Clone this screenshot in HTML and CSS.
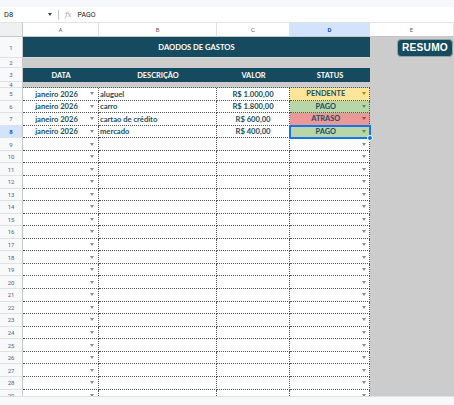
FILE: index.html
```html
<!DOCTYPE html>
<html lang="pt-BR">
<head>
<meta charset="utf-8">
<title>Gastos</title>
<link rel="stylesheet" href="styles.css">
</head>
<body>
<div class="app">
  <div class="topbar"></div>
  <div class="formula">
    <span class="ref">D8</span>
    <span class="refarrow"></span>
    <span class="sep"></span>
    <span class="fx">fx</span>
    <span class="fval">PAGO</span>
  </div>
  <div class="sheet">
    <div class="row hdr">
      <div class="corner"></div>
      <div class="ch">A</div><div class="ch">B</div><div class="ch">C</div><div class="ch sel">D</div><div class="ch">E</div>
    </div>
    <div class="row r1">
      <div class="rn">1</div>
      <div class="title">DAODOS DE GASTOS</div>
      <div class="e"><div class="btn">RESUMO</div></div>
    </div>
    <div class="row r2">
      <div class="rn">2</div>
      <div class="gray span4"></div>
      <div class="e"></div>
    </div>
    <div class="row r3">
      <div class="rn">3</div>
      <div class="th">DATA</div><div class="th">DESCRIÇÃO</div><div class="th">VALOR</div><div class="th">STATUS</div>
      <div class="e"></div>
    </div>
    <div class="row r4">
      <div class="rn">4</div>
      <div class="gray span4 dotb"></div>
      <div class="e"></div>
    </div>

    <div class="row dr">
      <div class="rn">5</div>
      <div class="c a"><span class="t">janeiro 2026</span><i class="arr"></i></div>
      <div class="c b">aluguel</div>
      <div class="c cv">R$ 1.000,00</div>
      <div class="c d pend"><span class="t">PENDENTE</span><i class="arr"></i></div>
      <div class="e"></div>
    </div>
    <div class="row dr">
      <div class="rn">6</div>
      <div class="c a"><span class="t">janeiro 2026</span><i class="arr"></i></div>
      <div class="c b">carro</div>
      <div class="c cv">R$ 1.800,00</div>
      <div class="c d pago"><span class="t">PAGO</span><i class="arr"></i></div>
      <div class="e"></div>
    </div>
    <div class="row dr">
      <div class="rn">7</div>
      <div class="c a"><span class="t">janeiro 2026</span><i class="arr"></i></div>
      <div class="c b">cartao de crédito</div>
      <div class="c cv">R$ 600,00</div>
      <div class="c d atraso"><span class="t">ATRASO</span><i class="arr"></i></div>
      <div class="e"></div>
    </div>
    <div class="row dr">
      <div class="rn sel">8</div>
      <div class="c a"><span class="t">janeiro 2026</span><i class="arr"></i></div>
      <div class="c b">mercado</div>
      <div class="c cv">R$ 400,00</div>
      <div class="c d pago active"><span class="t">PAGO</span><i class="arr"></i><b class="handle"></b></div>
      <div class="e"></div>
    </div>

    <div class="row dr"><div class="rn">9</div><div class="c a"><span class="t"></span><i class="arr"></i></div><div class="c b"></div><div class="c cv"></div><div class="c d"><span class="t"></span><i class="arr"></i></div><div class="e"></div></div>
    <div class="row dr"><div class="rn">10</div><div class="c a"><span class="t"></span><i class="arr"></i></div><div class="c b"></div><div class="c cv"></div><div class="c d"><span class="t"></span><i class="arr"></i></div><div class="e"></div></div>
    <div class="row dr"><div class="rn">11</div><div class="c a"><span class="t"></span><i class="arr"></i></div><div class="c b"></div><div class="c cv"></div><div class="c d"><span class="t"></span><i class="arr"></i></div><div class="e"></div></div>
    <div class="row dr"><div class="rn">12</div><div class="c a"><span class="t"></span><i class="arr"></i></div><div class="c b"></div><div class="c cv"></div><div class="c d"><span class="t"></span><i class="arr"></i></div><div class="e"></div></div>
    <div class="row dr"><div class="rn">13</div><div class="c a"><span class="t"></span><i class="arr"></i></div><div class="c b"></div><div class="c cv"></div><div class="c d"><span class="t"></span><i class="arr"></i></div><div class="e"></div></div>
    <div class="row dr"><div class="rn">14</div><div class="c a"><span class="t"></span><i class="arr"></i></div><div class="c b"></div><div class="c cv"></div><div class="c d"><span class="t"></span><i class="arr"></i></div><div class="e"></div></div>
    <div class="row dr"><div class="rn">15</div><div class="c a"><span class="t"></span><i class="arr"></i></div><div class="c b"></div><div class="c cv"></div><div class="c d"><span class="t"></span><i class="arr"></i></div><div class="e"></div></div>
    <div class="row dr"><div class="rn">16</div><div class="c a"><span class="t"></span><i class="arr"></i></div><div class="c b"></div><div class="c cv"></div><div class="c d"><span class="t"></span><i class="arr"></i></div><div class="e"></div></div>
    <div class="row dr"><div class="rn">17</div><div class="c a"><span class="t"></span><i class="arr"></i></div><div class="c b"></div><div class="c cv"></div><div class="c d"><span class="t"></span><i class="arr"></i></div><div class="e"></div></div>
    <div class="row dr"><div class="rn">18</div><div class="c a"><span class="t"></span><i class="arr"></i></div><div class="c b"></div><div class="c cv"></div><div class="c d"><span class="t"></span><i class="arr"></i></div><div class="e"></div></div>
    <div class="row dr"><div class="rn">19</div><div class="c a"><span class="t"></span><i class="arr"></i></div><div class="c b"></div><div class="c cv"></div><div class="c d"><span class="t"></span><i class="arr"></i></div><div class="e"></div></div>
    <div class="row dr"><div class="rn">20</div><div class="c a"><span class="t"></span><i class="arr"></i></div><div class="c b"></div><div class="c cv"></div><div class="c d"><span class="t"></span><i class="arr"></i></div><div class="e"></div></div>
    <div class="row dr"><div class="rn">21</div><div class="c a"><span class="t"></span><i class="arr"></i></div><div class="c b"></div><div class="c cv"></div><div class="c d"><span class="t"></span><i class="arr"></i></div><div class="e"></div></div>
    <div class="row dr"><div class="rn">22</div><div class="c a"><span class="t"></span><i class="arr"></i></div><div class="c b"></div><div class="c cv"></div><div class="c d"><span class="t"></span><i class="arr"></i></div><div class="e"></div></div>
    <div class="row dr"><div class="rn">23</div><div class="c a"><span class="t"></span><i class="arr"></i></div><div class="c b"></div><div class="c cv"></div><div class="c d"><span class="t"></span><i class="arr"></i></div><div class="e"></div></div>
    <div class="row dr"><div class="rn">24</div><div class="c a"><span class="t"></span><i class="arr"></i></div><div class="c b"></div><div class="c cv"></div><div class="c d"><span class="t"></span><i class="arr"></i></div><div class="e"></div></div>
    <div class="row dr"><div class="rn">25</div><div class="c a"><span class="t"></span><i class="arr"></i></div><div class="c b"></div><div class="c cv"></div><div class="c d"><span class="t"></span><i class="arr"></i></div><div class="e"></div></div>
    <div class="row dr"><div class="rn">26</div><div class="c a"><span class="t"></span><i class="arr"></i></div><div class="c b"></div><div class="c cv"></div><div class="c d"><span class="t"></span><i class="arr"></i></div><div class="e"></div></div>
    <div class="row dr"><div class="rn">27</div><div class="c a"><span class="t"></span><i class="arr"></i></div><div class="c b"></div><div class="c cv"></div><div class="c d"><span class="t"></span><i class="arr"></i></div><div class="e"></div></div>
    <div class="row dr"><div class="rn">28</div><div class="c a"><span class="t"></span><i class="arr"></i></div><div class="c b"></div><div class="c cv"></div><div class="c d"><span class="t"></span><i class="arr"></i></div><div class="e"></div></div>
    <div class="row dr"><div class="rn">29</div><div class="c a"><span class="t"></span><i class="arr"></i></div><div class="c b"></div><div class="c cv"></div><div class="c d"><span class="t"></span><i class="arr"></i></div><div class="e"></div></div>
  </div>
  <div class="hscroll"></div>
</div>
</body>
</html>
```

FILE: styles.css
```css
* { box-sizing: border-box; }
html, body {
  margin: 0;
  padding: 0;
  width: 454px;
  height: 405px;
  overflow: hidden;
  background: #ffffff;
  font-family: Lato, "Noto Sans", sans-serif;
}
.app {
  width: 454px;
  height: 405px;
  display: flex;
  flex-direction: column;
  overflow: hidden;
}
.topbar {
  height: 7px;
  background: #f6f8fc;
  flex: none;
}
.formula {
  height: 16px;
  flex: none;
  display: flex;
  align-items: center;
  background: #ffffff;
  border-bottom: 1px solid #e3e3e3;
  font-family: Roboto, "Liberation Sans", sans-serif;
  color: #202124;
}
.ref {
  font-size: 7.5px;
  margin-left: 4px;
  width: 42px;
}
.refarrow {
  width: 0;
  height: 0;
  border-left: 2.5px solid transparent;
  border-right: 2.5px solid transparent;
  border-top: 3px solid #444;
  margin-left: 2px;
}
.sep {
  width: 1px;
  height: 10px;
  background: #c7c7c7;
  margin-left: 6px;
}
.fx {
  font-family: "DejaVu Serif", serif;
  font-style: italic;
  font-size: 7px;
  color: #9aa0a6;
  margin-left: 6px;
}
.fval {
  font-size: 7px;
  margin-left: 6px;
}
.sheet {
  height: 373px;
  flex: none;
  overflow: hidden;
}
.row {
  display: grid;
  grid-template-columns: 23px 76px 118px 73px 80px 84px;
}
.row > div { min-width: 0; }
.hdr { height: 14px; }
.r1 { height: 21px; }
.r2 { height: 10px; }
.r3 { height: 14px; }
.r4 { height: 6px; }
.dr { height: 12.57px; }

.corner {
  background: #eef0f2;
  border-right: 1px solid #c4c7c5;
  border-bottom: 1px solid #c4c7c5;
}
.ch {
  background: #ffffff;
  border-right: 1px solid #e1e1e1;
  border-bottom: 1px solid #c4c7c5;
  font-family: Roboto, "Liberation Sans", sans-serif;
  font-size: 6px;
  color: #5f6368;
  display: flex;
  align-items: center;
  justify-content: center;
}
.ch.sel {
  background: #d3e3fd;
  color: #0b57d0;
  font-weight: 700;
}
.rn {
  background: #f8f9fa;
  border-right: 1px solid #c4c7c5;
  border-bottom: 1px solid #e1e1e1;
  font-family: Roboto, "Liberation Sans", sans-serif;
  font-size: 6px;
  color: #5f6368;
  display: flex;
  align-items: center;
  justify-content: center;
  overflow: hidden;
}
.rn.sel {
  background: #d3e3fd;
  color: #0b57d0;
  font-weight: 700;
}
.title {
  grid-column: span 4;
  background: #164b5f;
  color: #ffffff;
  font-weight: 700;
  font-size: 7.6px;
  display: flex;
  align-items: center;
  justify-content: center;
  border-bottom: 1px solid #d8d8d8;
}
.e {
  background: #cccccc;
  overflow: hidden;
}
.r1 .e {
  display: flex;
  align-items: center;
}
.btn {
  margin-left: 27px;
  width: 56px;
  height: 18px;
  flex: none;
  background: #164b5f;
  border: 1px solid #8fa3ab;
  border-radius: 4px;
  color: #ffffff;
  font-family: "Liberation Sans", Arial, sans-serif;
  font-weight: 700;
  font-size: 10.2px;
  display: flex;
  align-items: center;
  justify-content: center;
  letter-spacing: 0.2px;
}
.gray {
  background: #cccccc;
}
.span4 { grid-column: span 4; }
.dotb { border-bottom: 1px dotted #555; }
.th {
  background: #164b5f;
  color: #ffffff;
  font-weight: 700;
  font-size: 7.4px;
  display: flex;
  align-items: center;
  justify-content: center;
}
.c {
  background: #ffffff;
  border-right: 1px dotted #555;
  border-bottom: 1px dotted #555;
  color: #1b4d61;
  font-weight: 700;
  font-size: 7.6px;
  display: flex;
  align-items: center;
  white-space: nowrap;
  overflow: hidden;
  position: relative;
}
.c.a { padding-right: 4px; }
.c.b { padding-left: 1px; }
.c.cv { justify-content: center; }
.c.d { padding-right: 3.5px; overflow: visible; }
.c .t {
  flex: 1;
  text-align: center;
}
.c.d .t { font-size: 7.4px; }
.arr {
  flex: none;
  width: 0;
  height: 0;
  border-left: 2.5px solid transparent;
  border-right: 2.5px solid transparent;
  border-top: 3px solid #8a8a8a;
}
.pend { background: #fde59c; }
.pend .arr { border-top-color: #b8860b; }
.pago { background: #b7d7a8; }
.pago .arr { border-top-color: #5f8f4e; }
.atraso { background: #ea9999; }
.atraso .arr { border-top-color: #b83a3a; }
.active {
  outline: 2px solid #1a73e8;
  outline-offset: -1px;
  z-index: 2;
}
.handle {
  position: absolute;
  right: -4px;
  bottom: -4px;
  width: 6px;
  height: 6px;
  border-radius: 50%;
  background: #1a73e8;
  border: 1px solid #ffffff;
}
.hscroll {
  flex: 1;
  background: #f8f9fa;
  border-top: 1px solid #e1e1e1;
}
```
